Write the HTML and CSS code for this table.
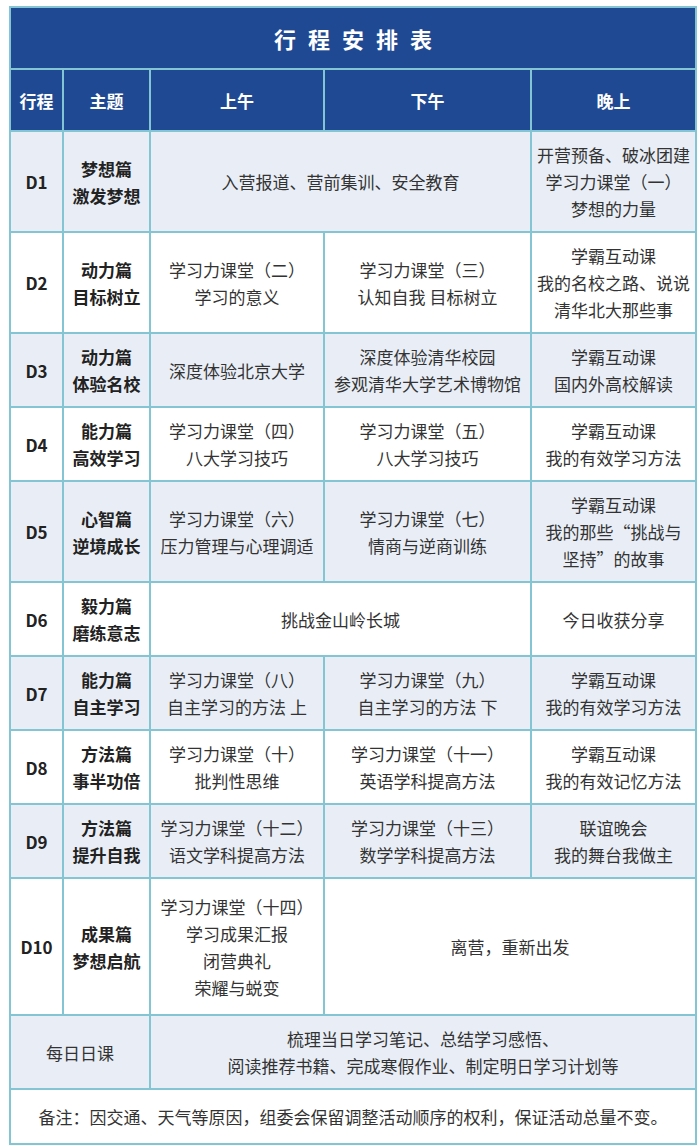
FILE: index.html
```html
<!DOCTYPE html>
<html lang="zh">
<head>
<meta charset="utf-8">
<link rel="stylesheet" href="styles.css">
</head>
<body>
<table class="sched">
<colgroup>
<col class="c-day"><col class="c-theme"><col class="c-am"><col class="c-pm"><col class="c-eve">
</colgroup>
<tr class="title-row"><th colspan="5" class="title">行程安排表</th></tr>
<tr class="head-row"><th>行程</th><th>主题</th><th>上午</th><th>下午</th><th>晚上</th></tr>
<tr class="r-tall shade"><td class="day">D1</td><td class="theme">梦想篇<br>激发梦想</td><td colspan="2">入营报道、营前集训、安全教育</td><td>开营预备、破冰团建<br>学习力课堂（一）<br>梦想的力量</td></tr>
<tr class="r-tall"><td class="day">D2</td><td class="theme">动力篇<br>目标树立</td><td>学习力课堂（二）<br>学习的意义</td><td>学习力课堂（三）<br>认知自我 目标树立</td><td>学霸互动课<br>我的名校之路、说说<br>清华北大那些事</td></tr>
<tr class="r-mid shade"><td class="day">D3</td><td class="theme">动力篇<br>体验名校</td><td>深度体验北京大学</td><td>深度体验清华校园<br>参观清华大学艺术博物馆</td><td>学霸互动课<br>国内外高校解读</td></tr>
<tr class="r-mid"><td class="day">D4</td><td class="theme">能力篇<br>高效学习</td><td>学习力课堂（四）<br>八大学习技巧</td><td>学习力课堂（五）<br>八大学习技巧</td><td>学霸互动课<br>我的有效学习方法</td></tr>
<tr class="r-tall shade"><td class="day">D5</td><td class="theme">心智篇<br>逆境成长</td><td>学习力课堂（六）<br>压力管理与心理调适</td><td>学习力课堂（七）<br>情商与逆商训练</td><td>学霸互动课<br>我的那些“挑战与<br>坚持”的故事</td></tr>
<tr class="r-mid"><td class="day">D6</td><td class="theme">毅力篇<br>磨练意志</td><td colspan="2">挑战金山岭长城</td><td>今日收获分享</td></tr>
<tr class="r-mid shade"><td class="day">D7</td><td class="theme">能力篇<br>自主学习</td><td>学习力课堂（八）<br>自主学习的方法 上</td><td>学习力课堂（九）<br>自主学习的方法 下</td><td>学霸互动课<br>我的有效学习方法</td></tr>
<tr class="r-mid"><td class="day">D8</td><td class="theme">方法篇<br>事半功倍</td><td>学习力课堂（十）<br>批判性思维</td><td>学习力课堂（十一）<br>英语学科提高方法</td><td>学霸互动课<br>我的有效记忆方法</td></tr>
<tr class="r-mid shade"><td class="day">D9</td><td class="theme">方法篇<br>提升自我</td><td>学习力课堂（十二）<br>语文学科提高方法</td><td>学习力课堂（十三）<br>数学学科提高方法</td><td>联谊晚会<br>我的舞台我做主</td></tr>
<tr class="r-xl"><td class="day">D10</td><td class="theme">成果篇<br>梦想启航</td><td>学习力课堂（十四）<br>学习成果汇报<br>闭营典礼<br>荣耀与蜕变</td><td colspan="2">离营，重新出发</td></tr>
<tr class="r-mid shade"><td colspan="2">每日日课</td><td colspan="3">梳理当日学习笔记、总结学习感悟、<br>阅读推荐书籍、完成寒假作业、制定明日学习计划等</td></tr>
<tr class="r-note"><td colspan="5" class="note">备注：因交通、天气等原因，组委会保留调整活动顺序的权利，保证活动总量不变。</td></tr>
</table>
</body>
</html>
```
FILE: styles.css
```css
html, body {
  margin: 0;
  padding: 0;
  background: #ffffff;
}
body {
  padding: 6px 0 0 9px;
  font-family: "Noto Sans CJK SC", "Noto Sans", sans-serif;
  color: #333333;
}
.sched {
  border-collapse: collapse;
  table-layout: fixed;
  width: 686px;
}
.c-day { width: 53px; }
.c-theme { width: 87px; }
.c-am { width: 174px; }
.c-pm { width: 207px; }
.c-eve { width: 165px; }
.sched th, .sched td {
  border: 2px solid #84c5d3;
  text-align: center;
  vertical-align: middle;
  padding: 0;
  font-size: 17px;
  line-height: 27px;
}
.sched th {
  background: #1f4a93;
  color: #ffffff;
  font-weight: 700;
}
.title-row { height: 62px; }
.sched th.title {
  font-size: 22px;
  letter-spacing: 12px;
  text-indent: 12px;
}
.head-row { height: 62px; }
.r-tall { height: 101px; }
.r-mid { height: 74px; }
.r-xl { height: 137px; }
.r-note { height: 55px; }
.shade td { background: #e9eef6; }
.sched td.day {
  font-weight: 700;
  color: #222222;
}
.sched td.theme {
  font-weight: 700;
  color: #222222;
}
.sched td.note {
  font-size: 17px;
}
```
